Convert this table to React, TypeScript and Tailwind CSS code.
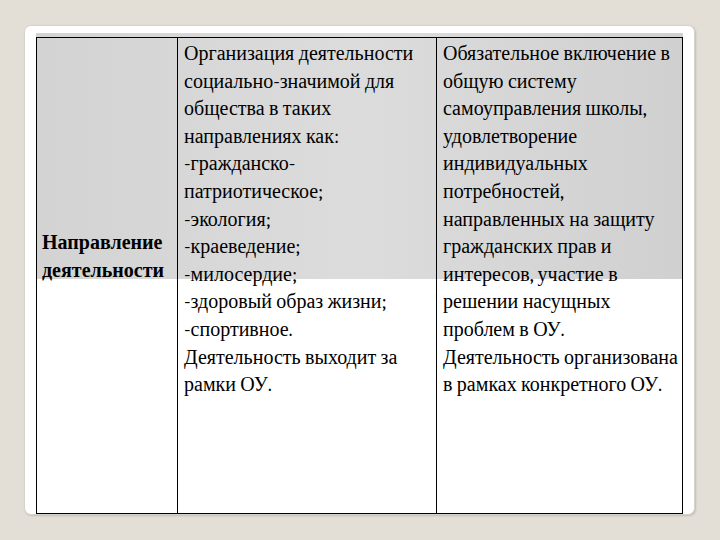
const middle = [
  "Организация деятельности",
  "социально-значимой для",
  "общества в таких",
  "направлениях как:",
  "-гражданско-",
  "патриотическое;",
  "-экология;",
  "-краеведение;",
  "-милосердие;",
  "-здоровый образ жизни;",
  "-спортивное.",
  "Деятельность выходит за",
  "рамки ОУ.",
];

const right = [
  "Обязательное включение в",
  "общую систему",
  "самоуправления школы,",
  "удовлетворение",
  "индивидуальных",
  "потребностей,",
  "направленных на защиту",
  "гражданских прав и",
  "интересов, участие в",
  "решении насущных",
  "проблем в ОУ.",
  "Деятельность организована",
  "в рамках конкретного ОУ.",
];

function Lines({ items }: { items: string[] }) {
  return (
    <div className="flex flex-col">
      {items.map((line, i) => (
        <div key={i} className="h-[27.6px] leading-[27.6px] whitespace-nowrap">
          {line}
        </div>
      ))}
    </div>
  );
}

export default function App() {
  return (
    <div className="w-[720px] h-[540px] bg-[#e3dfd7] pt-[25px] pl-[24px] font-serif text-[20px] text-black">
      {/* slide card */}
      <div className="relative w-[671px] h-[490px] bg-white rounded-[7px] border border-[#d6d3cc] shadow-[1px_1px_2px_rgba(0,0,0,0.15)] px-[11px] pt-[11px]">
        {/* shaded band over upper half */}
        <div className="absolute left-[11px] right-[11px] top-[7px] h-[246px] bg-gradient-to-r from-[#d3d3d3] via-[#dcdcdc] to-[#d0d0d0]" />

        <div className="relative flex h-[477px] border border-black">
          <div className="w-[141px] shrink-0 border-r border-black pl-[5px] pt-[191px] font-bold leading-[27.6px]">
            <div className="whitespace-nowrap">Направление</div>
            <div className="whitespace-nowrap">деятельности</div>
          </div>
          <div className="w-[259px] shrink-0 border-r border-black pl-[6px] pt-[2px]">
            <Lines items={middle} />
          </div>
          <div className="flex-1 pl-[6px] pt-[2px]">
            <Lines items={right} />
          </div>
        </div>
      </div>
    </div>
  );
}
